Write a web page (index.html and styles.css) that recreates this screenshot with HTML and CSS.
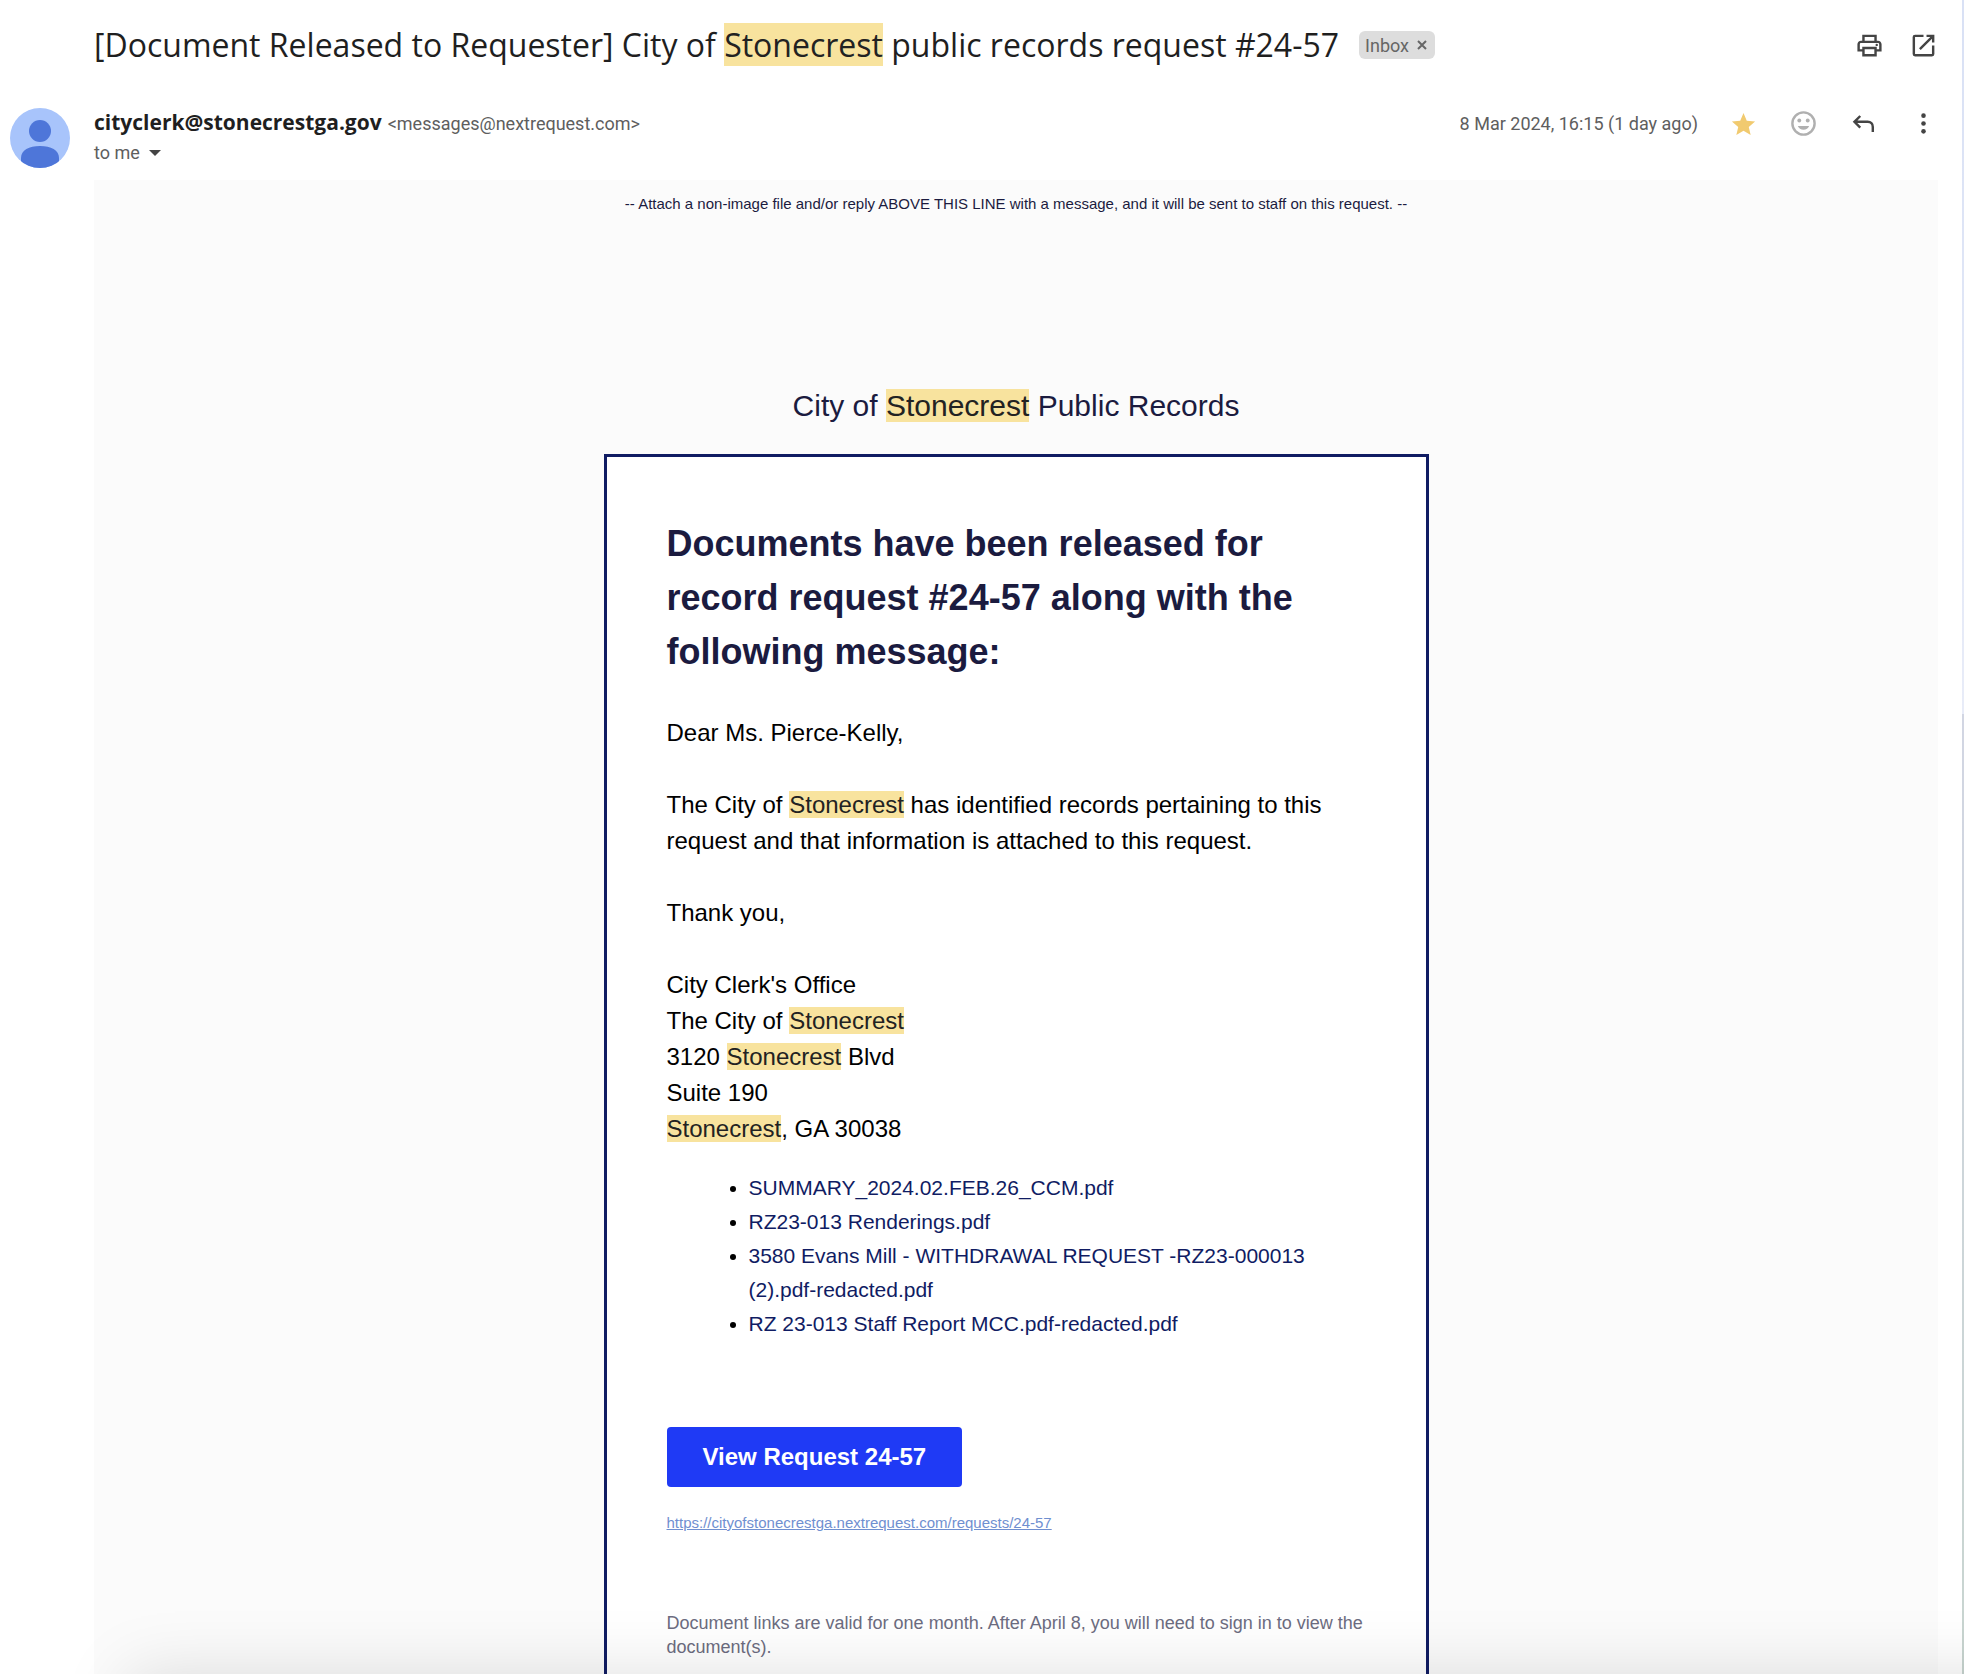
FILE: index.html
```html
<!DOCTYPE html>
<html lang="en">
<head>
    <meta charset="UTF-8">
    <title>[Document Released to Requester] City of Stonecrest public records request #24-57</title>
    <link rel="stylesheet" href="styles.css">
</head>
<body>
<main class="viewer">
    <header class="subject-bar">
        <h1 class="subject">[Document Released to Requester] City of <mark>Stonecrest</mark> public records request #24-57</h1>
        <span class="label-chip">Inbox
            <button type="button" class="chip-close" aria-label="Remove label Inbox">
                <svg viewBox="0 0 10 10"><path d="M1 1l8 8M9 1L1 9"/></svg>
            </button>
        </span>
        <div class="subject-tools">
            <button type="button" class="icon-btn" aria-label="Print all">
                <svg viewBox="0 0 24 24"><path d="M19 8h-1V3H6v5H5c-1.66 0-3 1.34-3 3v6h4v4h12v-4h4v-6c0-1.66-1.34-3-3-3zM8 5h8v3H8V5zm8 12v2H8v-4h8v2zm2-2v-2H6v2H4v-4c0-.55.45-1 1-1h14c.55 0 1 .45 1 1v4h-2z"/><circle cx="18" cy="11.5" r="1"/></svg>
            </button>
            <button type="button" class="icon-btn" aria-label="Open in new window">
                <svg class="line-icon" viewBox="0 0 24 24"><path d="M12 4H5a1 1 0 0 0-1 1v14a1 1 0 0 0 1 1h14a1 1 0 0 0 1-1v-7M14.500 4H20v5.500M9 15L20 4"/></svg>
            </button>
        </div>
    </header>

    <section class="sender-row">
        <svg class="avatar" viewBox="0 0 60 60" role="img" aria-label="Sender">
            <defs><clipPath id="avatar-clip"><circle cx="30" cy="30" r="30"/></clipPath></defs>
            <g clip-path="url(#avatar-clip)">
                <rect width="60" height="60" fill="#a8c4fb"/>
                <circle cx="30" cy="23" r="11" fill="#4e76d9"/>
                <path d="M11 60V50c0-8 8-12 19-12s19 4 19 12v10z" fill="#4e76d9"/>
            </g>
        </svg>
        <div class="sender">
            <div class="sender-line">
                <span class="sender-name">cityclerk@stonecrestga.gov</span>
                <span class="sender-mail">&lt;messages@nextrequest.com&gt;</span>
            </div>
            <button type="button" class="to-me">to me
                <svg viewBox="0 0 12 6"><path d="M0 0h12L6 6z"/></svg>
            </button>
        </div>
        <div class="message-tools">
            <time class="date" datetime="2024-03-08T16:15">8 Mar 2024, 16:15 (1 day ago)</time>
            <button type="button" class="icon-btn star" aria-label="Starred">
                <svg viewBox="-0.5 -1.500 25 25"><path d="M12 17.270L18.180 21l-1.640-7.030L22 9.240l-7.190-.61L12 2 9.190 8.630 2 9.240l5.460 4.730L5.820 21z"/></svg>
            </button>
            <button type="button" class="icon-btn smiley" aria-label="Add reaction">
                <svg viewBox="0 0 24 24"><circle class="ring" cx="12" cy="12" r="9.200"/><circle cx="8.500" cy="9.500" r="1.600"/><circle cx="15.500" cy="9.500" r="1.600"/><path d="M7.300 14h9.400c-.7 2-2.500 3.200-4.700 3.200S8 16 7.300 14z"/></svg>
            </button>
            <button type="button" class="icon-btn" aria-label="Reply">
                <svg class="line-icon" viewBox="0 0 24 24"><path d="M9.300 5.800L4.500 10.600l4.800 4.800M4.500 10.600H15.500c2.500 0 4.200 1.700 4.200 4.200V19"/></svg>
            </button>
            <button type="button" class="icon-btn" aria-label="More">
                <svg viewBox="0 0 24 24"><circle cx="12" cy="5.500" r="1.900"/><circle cx="12" cy="12" r="1.900"/><circle cx="12" cy="18.500" r="1.900"/></svg>
            </button>
        </div>
    </section>

    <article class="mail-body">
        <p class="reply-line">-- Attach a non-image file and/or reply ABOVE THIS LINE with a message, and it will be sent to staff on this request. --</p>
        <p class="portal-name">City of <mark>Stonecrest</mark> Public Records</p>

        <div class="card">
            <h2>Documents have been released for record request #24-57 along with the following message:</h2>

            <div class="letter">
                <p>Dear Ms. Pierce-Kelly,</p>
                <p>The City of <mark>Stonecrest</mark> has identified records pertaining to this request and that information is attached to this request.</p>
                <p>Thank you,</p>
                <p>
                    City Clerk's Office<br>
                    The City of <mark>Stonecrest</mark><br>
                    3120 <mark>Stonecrest</mark> Blvd<br>
                    Suite 190<br>
                    <mark>Stonecrest</mark>, GA 30038
                </p>
            </div>

            <ul class="documents">
                <li><a href="#">SUMMARY_2024.02.FEB.26_CCM.pdf</a></li>
                <li><a href="#">RZ23-013 Renderings.pdf</a></li>
                <li><a href="#">3580 Evans Mill - WITHDRAWAL REQUEST -RZ23-000013 (2).pdf-redacted.pdf</a></li>
                <li><a href="#">RZ 23-013 Staff Report MCC.pdf-redacted.pdf</a></li>
            </ul>

            <a class="view-btn" href="#">View Request 24-57</a>
            <a class="request-url" href="#">https://cityofstonecrestga.nextrequest.com/requests/24-57</a>

            <p class="notice">Document links are valid for one month. After April 8, you will need to sign in to view the document(s).</p>
        </div>
    </article>
</main>
</body>
</html>
```
FILE: styles.css
```css
* {
    box-sizing: border-box;
}

body {
    margin: 0;
    font-family: Roboto, sans-serif;
    font-size: 18px;
    color: #5e5e5e;
    background-color: #fff;
}

h1, h2, p, ul {
    margin: 0;
}

button {
    padding: 0;
    border: none;
    background: none;
    font: inherit;
    color: inherit;
    cursor: pointer;
}

mark {
    background-color: #f8e39e;
    color: #222;
}

.viewer {
    position: relative;
    height: 100vh;
    overflow: hidden;
    padding: 25px 26px 0 10px;
    /* sliver of the window behind on the right edge */
    background: linear-gradient(#d9e1f5 0, #e8ecf8 714px, #d2d6e3 714px, #c8d5d0 100%) right / 2px 100% no-repeat;
}

/* shadow coming up from the bottom of the window */
.viewer::after {
    content: "";
    position: absolute;
    top: 100%;
    left: 128px;
    right: -128px;
    height: 200px;
    box-shadow: 0 0 64px rgba(0, 0, 0, 0.13);
    pointer-events: none;
}

.subject-bar {
    display: flex;
    align-items: center;
    padding-left: 84px;
    margin-bottom: 43px;
}

.subject {
    font-family: "Open Sans", sans-serif;
    font-size: 32px;
    line-height: 40px;
    font-weight: 400;
    color: #1f1f1f;
}

.label-chip {
    display: flex;
    align-items: center;
    gap: 8px;
    height: 28px;
    margin-left: 20px;
    padding: 0 8px 0 6px;
    border-radius: 6px;
    background-color: #ddd;
    color: #666;
}

.chip-close {
    display: flex;
}

.chip-close svg {
    width: 10px;
    height: 10px;
    fill: none;
    stroke: #666;
    stroke-width: 2;
}

.subject-tools {
    display: flex;
    gap: 24px;
    margin-left: auto;
}

.icon-btn {
    display: flex;
    align-items: center;
    justify-content: center;
    width: 30px;
    height: 30px;
}

.icon-btn svg {
    width: 29px;
    height: 29px;
    fill: #444;
}

.icon-btn .line-icon {
    fill: none;
    stroke: #444;
    stroke-width: 2;
}

.star svg {
    fill: #f1ca6f;
}

.smiley svg {
    fill: #b0b0b0;
}

.smiley .ring {
    fill: none;
    stroke: #b0b0b0;
    stroke-width: 2;
}

.sender-row {
    display: flex;
    align-items: flex-start;
    margin-bottom: 12px;
}

.avatar {
    width: 60px;
    height: 60px;
    margin-right: 24px;
}

.sender-line {
    display: flex;
    align-items: baseline;
    gap: 6px;
    line-height: 28px;
}

.sender-name {
    font-family: "Open Sans", sans-serif;
    font-size: 21px;
    font-weight: 700;
    color: #1f1f1f;
}

.to-me {
    display: flex;
    align-items: center;
    gap: 9px;
    line-height: 30px;
}

.to-me svg {
    width: 12px;
    height: 6px;
    fill: #444;
}

.message-tools {
    display: flex;
    align-items: center;
    gap: 30px;
    margin-left: auto;
}

.mail-body {
    display: flex;
    flex-direction: column;
    align-items: center;
    margin-left: 84px;
    padding: 12px 0 60px;
    background-color: #fbfbfb;
    font-family: "Liberation Sans", Arial, sans-serif;
    color: #1b1b3f;
}

.reply-line {
    margin-bottom: 172px;
    font-size: 15px;
    line-height: 24px;
}

.portal-name {
    margin-bottom: 30px;
    font-size: 30px;
    line-height: 36px;
}

.card {
    width: 100%;
    max-width: 825px;
    padding: 60px;
    border: 3px solid #101c63;
    background-color: #fff;
}

.card h2 {
    margin-bottom: 36px;
    font-size: 36px;
    line-height: 54px;
}

.letter {
    font-size: 24px;
    line-height: 36px;
    color: #000;
}

.letter p + p {
    margin-top: 36px;
}

.documents {
    margin: 24px 0 86px;
    padding-left: 82px;
    font-size: 21px;
    line-height: 34px;
    color: #000;
}

.documents a {
    color: #101c63;
    text-decoration: none;
}

.view-btn {
    display: block;
    width: fit-content;
    margin-bottom: 24px;
    padding: 0 36px;
    border-radius: 4px;
    background-color: #1f3af5;
    color: #fff;
    font-size: 24px;
    font-weight: 700;
    line-height: 60px;
    text-decoration: none;
}

.request-url {
    display: block;
    margin-bottom: 76px;
    font-size: 15px;
    line-height: 24px;
    color: #6f8fd0;
}

.notice {
    font-size: 18px;
    line-height: 24px;
    color: #6c6c80;
}
```
